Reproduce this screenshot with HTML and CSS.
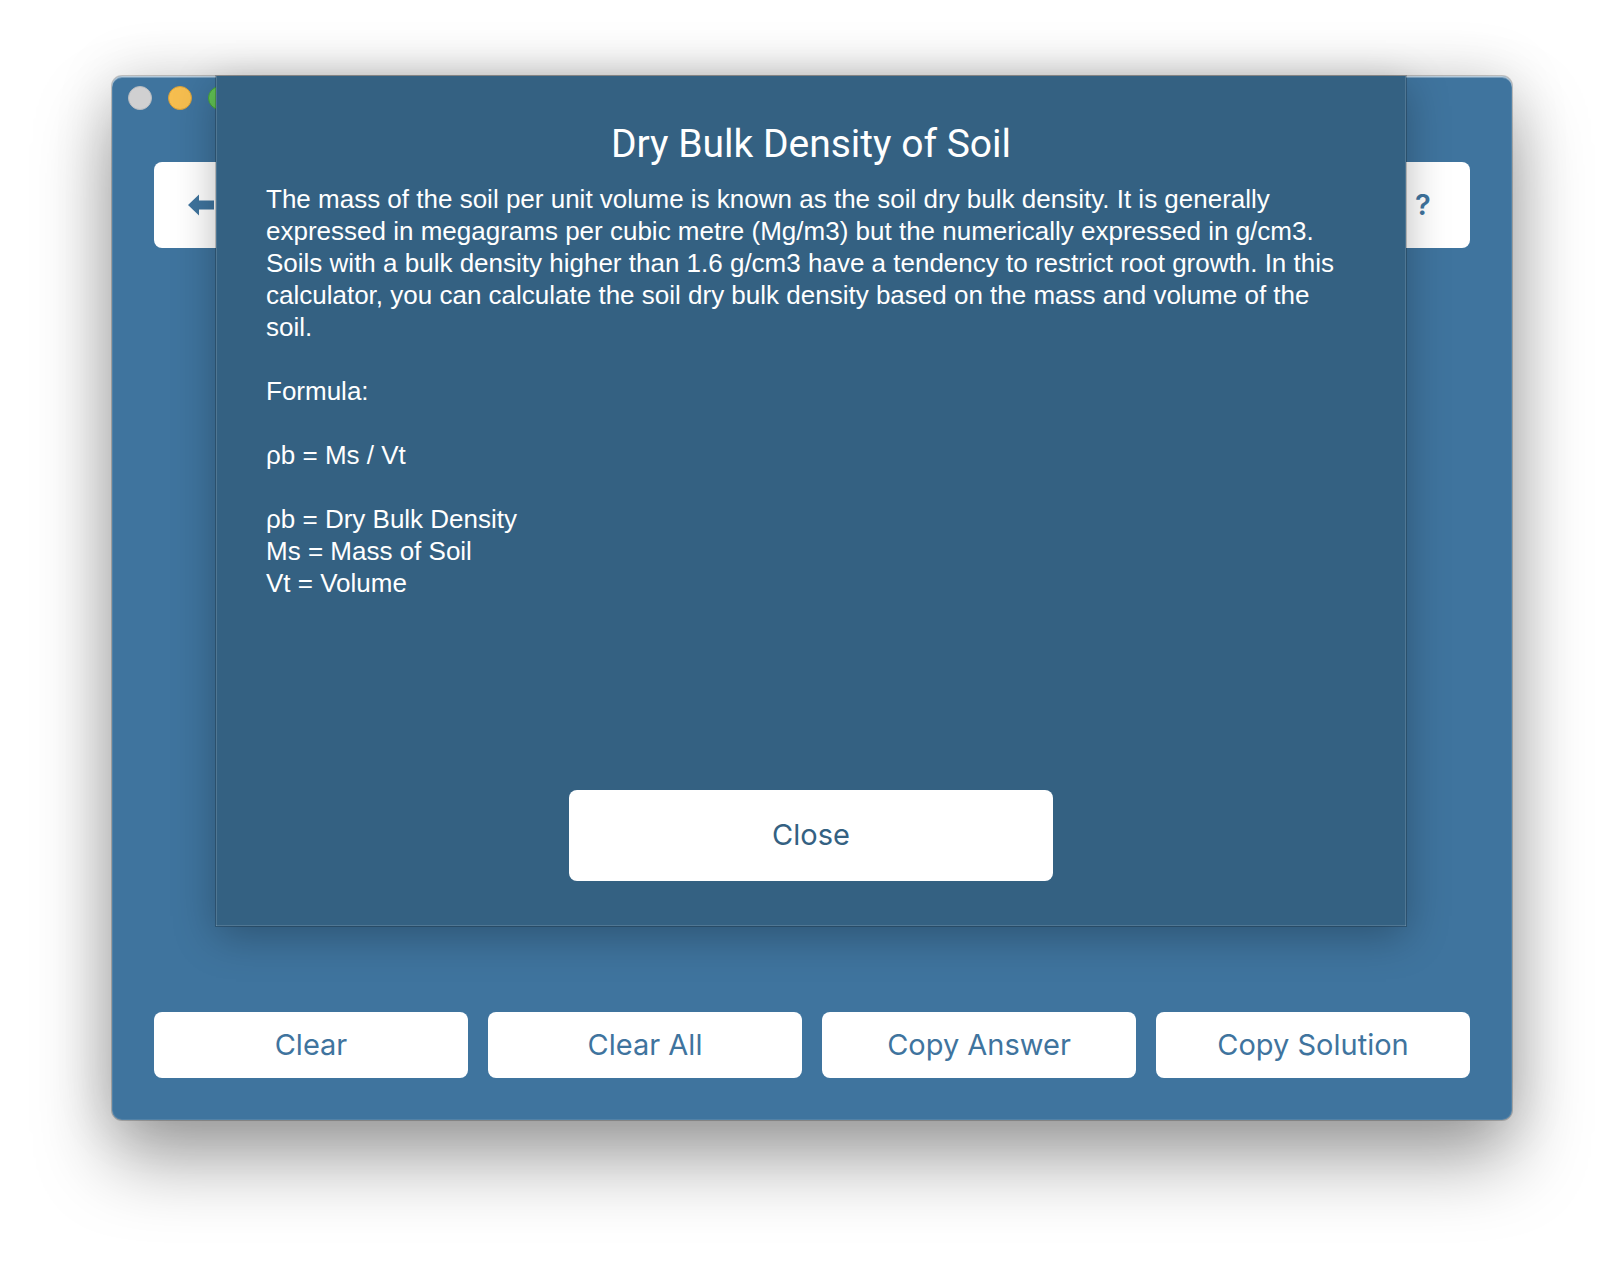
FILE: index.html
```html
<!DOCTYPE html>
<html lang="en">
<head>
<meta charset="utf-8">
<title>Dry Bulk Density of Soil</title>
<link rel="stylesheet" href="styles.css">
</head>
<body>
<main class="window">
  <header class="titlebar">
    <button class="light light-close" type="button" aria-label="Close window"></button>
    <button class="light light-minimize" type="button" aria-label="Minimize window"></button>
    <button class="light light-zoom" type="button" aria-label="Zoom window"></button>
  </header>
  <nav class="toolbar">
    <button class="button tool" type="button" aria-label="Back">
      <svg class="arrow" viewBox="0 0 26 22" aria-hidden="true"><path d="M0 11 11 0.5V6.500H26V15.500H11V21.500Z"/></svg>
    </button>
    <button class="button tool" type="button" aria-label="Help">?</button>
  </nav>
  <footer class="actions">
    <button class="button action" type="button">Clear</button>
    <button class="button action" type="button">Clear All</button>
    <button class="button action" type="button">Copy Answer</button>
    <button class="button action" type="button">Copy Solution</button>
  </footer>
  <section class="sheet" role="dialog" aria-labelledby="sheet-title">
    <h1 class="sheet-title" id="sheet-title">Dry Bulk Density of Soil</h1>
    <div class="sheet-body">
      <p>The mass of the soil per unit volume is known as the soil dry bulk density. It is generally expressed in megagrams per cubic metre (Mg/m3) but the numerically expressed in g/cm3. Soils with a bulk density higher than 1.6 g/cm3 have a tendency to restrict root growth. In this calculator, you can calculate the soil dry bulk density based on the mass and volume of the soil.</p>
      <p>Formula:</p>
      <p>ρb = Ms / Vt</p>
      <p>ρb = Dry Bulk Density<br>Ms = Mass of Soil<br>Vt = Volume</p>
    </div>
    <button class="button close" type="button">Close</button>
  </section>
</main>
</body>
</html>
```

FILE: styles.css
```css
* {
  box-sizing: border-box;
}

body {
  display: flex;
  min-height: 100vh;
  margin: 0;
  padding: 76px 112px 148px;
  background: #fff;
  font-family: Inter, "Liberation Sans", sans-serif;
}

.window {
  position: relative;
  display: flex;
  flex: 1;
  flex-direction: column;
  min-width: 0;
  padding-bottom: 42px;
  border-radius: 10px;
  background: #3f749e;
  box-shadow:
    inset 0 1px 0 rgba(255, 255, 255, 0.4),
    inset 0 2px 0 rgba(255, 255, 255, 0.3),
    inset 0 0 0 1px rgba(255, 255, 255, 0.1),
    0 0 0 1px rgba(0, 0, 0, 0.2),
    0 40px 76px rgba(0, 0, 0, 0.36),
    0 0 60px rgba(0, 0, 0, 0.14);
}

.titlebar {
  display: flex;
  gap: 16px;
  padding: 10px 16px;
}

.light {
  width: 24px;
  height: 24px;
  padding: 0;
  border: 1px solid;
  border-radius: 50%;
}

.light-close {
  border-color: #b9bcc0;
  background: #d0d0d1;
}

.light-minimize {
  border-color: #d9a038;
  background: #f6be4f;
}

.light-zoom {
  border-color: #46a53a;
  background: #61c354;
}

.toolbar {
  display: flex;
  justify-content: space-between;
  padding: 42px 42px 0;
}

.button {
  padding: 0;
  border: 0;
  border-radius: 8px;
  background: #fff;
  color: #3f749e;
  font: 400 29px/36px Inter, "Liberation Sans", sans-serif;
}

.tool {
  width: 94px;
  height: 86px;
  font-weight: 600;
}

.arrow {
  display: block;
  width: 26px;
  height: 22px;
  margin: 0 auto;
  fill: currentColor;
}

.actions {
  display: grid;
  grid-template-columns: repeat(4, 1fr);
  gap: 20px;
  margin-top: auto;
  padding: 0 42px;
}

.action {
  height: 66px;
}

.sheet {
  position: absolute;
  top: 0;
  right: 106px;
  left: 104px;
  display: flex;
  flex-direction: column;
  align-items: center;
  min-height: 850px;
  padding: 44px 50px 45px;
  background: #346182;
  color: #fff;
  box-shadow:
    inset 0 -1px 0 rgba(255, 255, 255, 0.14),
    inset 1px 0 0 rgba(255, 255, 255, 0.14),
    inset -1px 0 0 rgba(255, 255, 255, 0.14),
    0 0 0 1px rgba(0, 0, 0, 0.2),
    0 10px 40px rgba(0, 0, 0, 0.28);
}

.sheet-title {
  margin: 0 0 15px;
  font-family: Roboto, Inter, sans-serif;
  font-size: 39px;
  font-weight: 400;
  line-height: 48px;
}

.sheet-body {
  align-self: stretch;
  font-family: "Liberation Sans", Arial, sans-serif;
  font-size: 26px;
  line-height: 32px;
}

.sheet-body p {
  margin: 0 0 32px;
}

.close {
  width: 484px;
  height: 91px;
  margin-top: auto;
  padding-bottom: 2px;
  color: #346182;
}
```
